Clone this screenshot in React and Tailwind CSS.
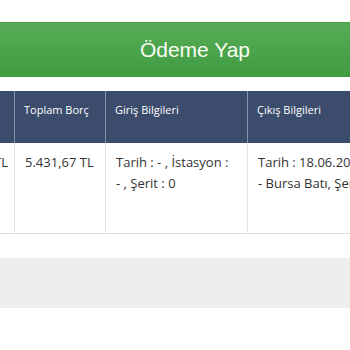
const headers = [
  { label: "Tutar", w: "w-[100px]", pr: "pr-[8px]" },
  { label: "Toplam Borç", w: "w-[91px]", pr: "pr-[8px]" },
  { label: "Giriş Bilgileri", w: "w-[142px]", pr: "pr-[14px]" },
  { label: "Çıkış Bilgileri", w: "w-[200px]", pr: "pr-[8px]" },
];

const App = () => {
  return (
    <div className="w-[350px] h-[350px] overflow-hidden bg-white font-['Open_Sans',sans-serif]">
      <div className="pt-[22px]">
        <button className="w-full h-[55px] flex items-center justify-center bg-gradient-to-b from-[#57ad57] to-[#3f9b40] border-t border-[#4a9f4a]">
          <span className="pl-[40px] text-[21px] text-[#f8fcf4] font-['Liberation_Sans',Arial,sans-serif]">
            Ödeme Yap
          </span>
        </button>
      </div>

      <div className="mt-[14px] -ml-[86px] w-[600px]">
        <div className="flex h-[52px] bg-[#3b4c6c]">
          {headers.map((h, i) => (
            <div
              key={h.label}
              className={`${h.w} shrink-0 pl-[9px] pt-[11px] text-[11px] text-white ${i > 0 ? "border-l border-[#8593ab]" : ""}`}
            >
              {h.label}
            </div>
          ))}
        </div>
        <div className="flex h-[91px] border-b border-[#dcdcdc] text-[13px] leading-[21px] text-[#333]">
          <div className={`${headers[0].w} shrink-0 pt-[9px] text-right pr-[6px]`}>1.250,00 TL</div>
          <div className={`${headers[1].w} ${headers[1].pr} shrink-0 pl-[10px] pt-[9px] border-l border-[#e3e3e3]`}>
            5.431,67 TL
          </div>
          <div className={`${headers[2].w} ${headers[2].pr} shrink-0 pl-[10px] pt-[9px] border-l border-[#e3e3e3]`}>
            Tarih : - , İstasyon : - , Şerit : 0
          </div>
          <div className={`${headers[3].w} shrink-0 pl-[10px] pt-[9px] border-l border-[#e3e3e3] whitespace-nowrap`}>
            <div>Tarih : 18.06.2024 14:32:15</div>
            <div>- Bursa Batı, Şerit : 3</div>
          </div>
        </div>
      </div>

      <div className="mt-[24px] h-[50px] bg-[#eeeeee]"></div>
    </div>
  );
};

export default App;
